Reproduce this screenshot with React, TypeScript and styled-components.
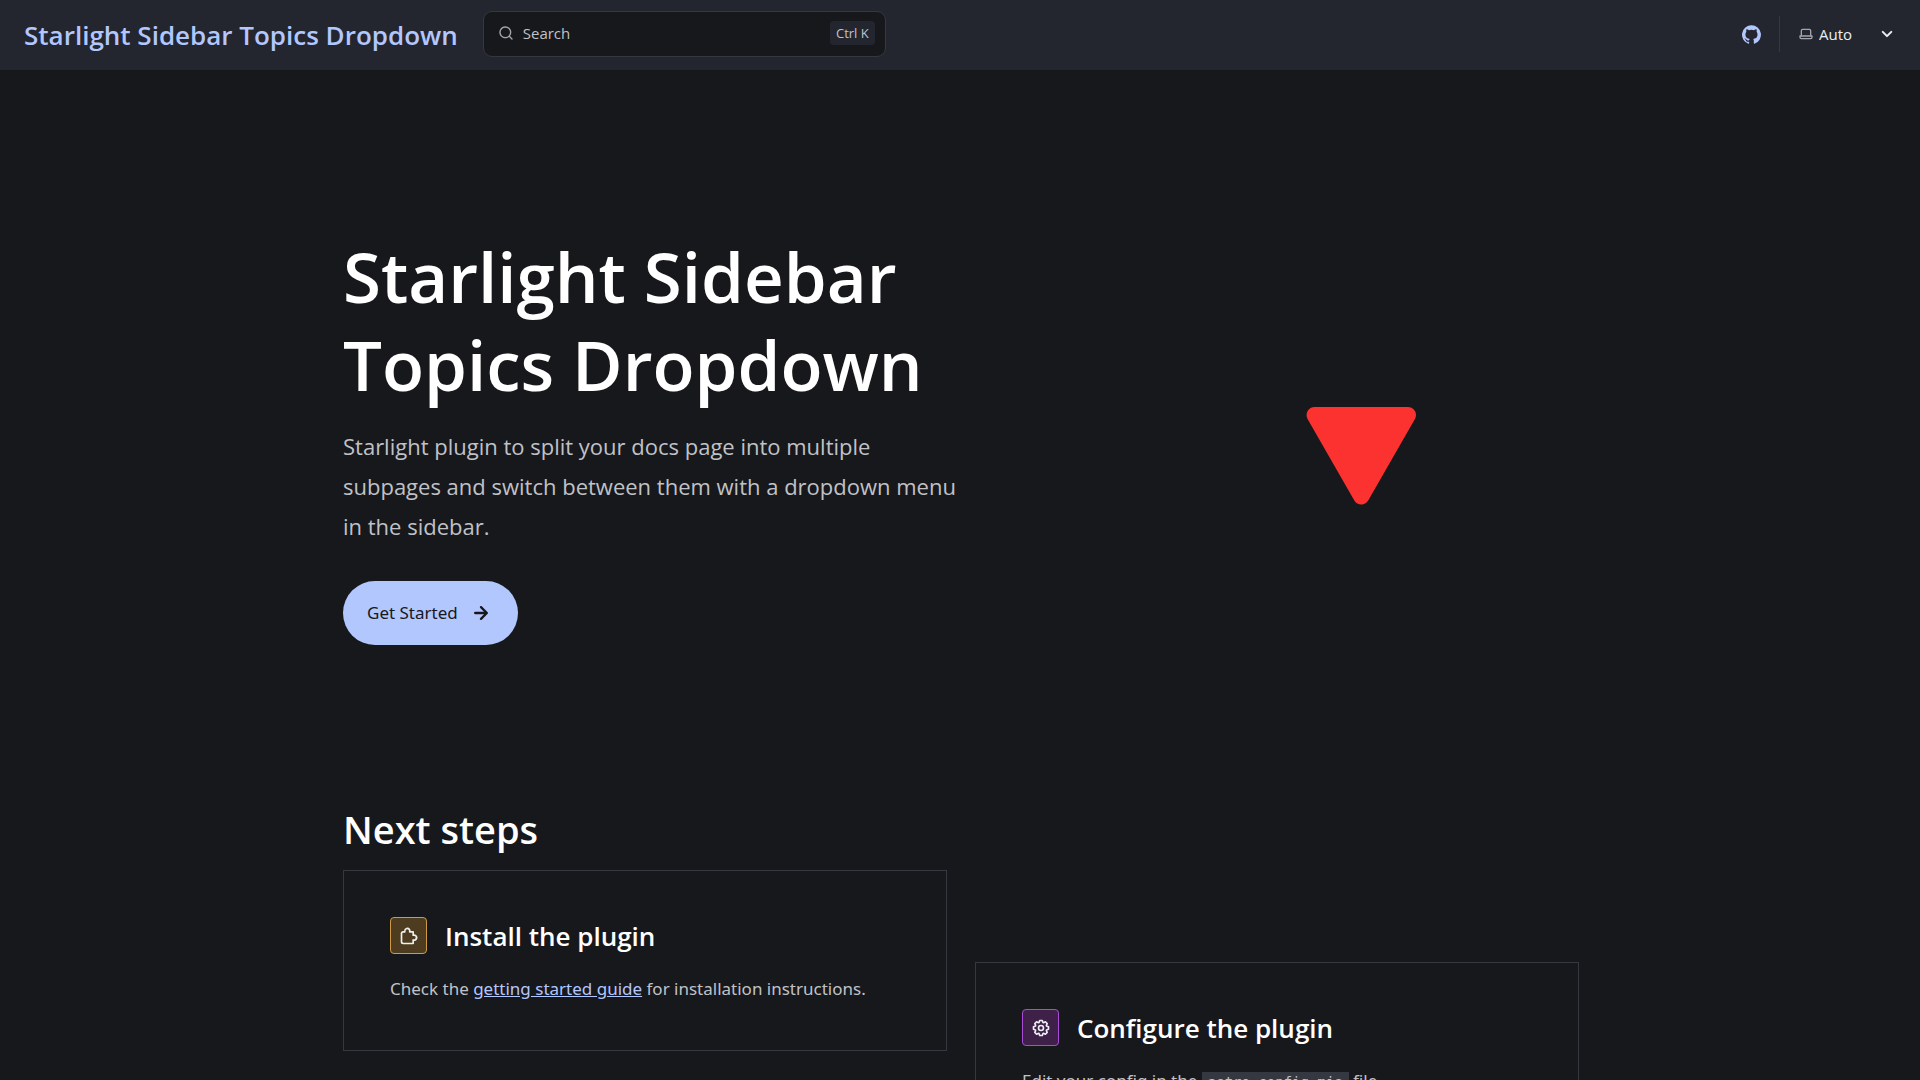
import React from "react";
import styled, { createGlobalStyle } from "styled-components";

const sans = '"Open Sans", "Noto Sans", sans-serif';
const prose = '"Noto Sans", "Open Sans", sans-serif';
const mono = '"DejaVu Sans Mono", "Liberation Mono", monospace';

const color = {
  page: "#17181c",
  panel: "#23262f",
  line: "#353841",
  text: "#c0c2c7",
  muted: "#a4a6ac",
  bright: "#eceef2",
  white: "#ffffff",
  accent: "#b3c7ff",
};

const GlobalStyle = createGlobalStyle`
  *, *::before, *::after { box-sizing: border-box; }
  body {
    margin: 0;
    background: ${color.page};
    color: ${color.text};
    font: 17px/30px ${prose};
  }
`;

const Page = styled.div`
  height: 100vh;
  overflow: hidden;
`;

const Header = styled.header`
  display: flex;
  align-items: center;
  gap: 25px;
  height: 70px;
  padding: 0 21px 2px 24px;
  background: ${color.panel};
`;

const SiteTitle = styled.a`
  padding-top: 2px;
  color: ${color.accent};
  font: 600 26px/36px ${sans};
  text-decoration: none;
  white-space: nowrap;
`;

const SearchButton = styled.button`
  display: flex;
  align-items: center;
  gap: 9px;
  width: 403px;
  height: 46px;
  padding: 0 10px 2px 14px;
  border: 1px solid ${color.line};
  border-radius: 9px;
  background: ${color.page};
  color: ${color.text};
  font: 15px/24px ${sans};
`;

const Key = styled.kbd`
  margin-left: auto;
  padding: 0 6px;
  border-radius: 4px;
  background: ${color.panel};
  font: 13px/24px ${sans};
`;

const HeaderTools = styled.div`
  display: flex;
  align-items: center;
  margin-left: auto;
`;

const SocialLink = styled.a`
  display: flex;
  align-items: center;
  height: 36px;
  padding-right: 18px;
  border-right: 1px solid ${color.line};
  color: ${color.accent};
`;

const ThemePicker = styled.label`
  display: flex;
  align-items: center;
  gap: 5px;
  padding-left: 18px;
  color: ${color.bright};
`;

const ThemeSelect = styled.select`
  width: 51px;
  padding: 0;
  border: 0;
  appearance: none;
  background: transparent;
  color: inherit;
  font: 15px/24px ${sans};
`;

const Main = styled.main`
  max-width: 1286px;
  margin: 0 auto;
  padding: 0 24px 0 26px;
`;

const Hero = styled.section`
  display: grid;
  grid-template-columns: 7fr 4fr;
  align-items: center;
  gap: 37px;
  padding: 162px 0 160px;
`;

const HeroTitle = styled.h1`
  margin: 0 0 18px;
  color: ${color.white};
  font: 600 69px/88px ${sans};
`;

const Tagline = styled.p`
  max-width: 620px;
  margin: 0 0 35px;
  font: 22px/40px ${sans};
`;

const ActionLink = styled.a`
  display: inline-flex;
  align-items: center;
  gap: 9px;
  height: 64px;
  padding: 0 23px 0 24px;
  border-radius: 32px;
  background: ${color.accent};
  color: ${color.page};
  text-decoration: none;
  vertical-align: top;
`;

const HeroArt = styled.svg`
  justify-self: center;
  width: 218px;
  height: 218px;
`;

const SectionTitle = styled.h2`
  margin: 0 0 17px;
  color: ${color.white};
  font: 600 38px/48px ${sans};
`;

const CardGrid = styled.div`
  display: grid;
  grid-template-columns: 1fr 1fr;
  align-items: start;
  gap: 28px;
`;

const Card = styled.article<{ $lowered?: boolean }>`
  display: flex;
  flex-direction: column;
  gap: 20px;
  margin-top: ${({ $lowered }) => ($lowered ? "92px" : "0")};
  padding: 46px;
  border: 1px solid ${color.line};
`;

const CardHead = styled.div`
  display: flex;
  align-items: center;
  gap: 18px;
  height: 37px;
`;

const CardIcon = styled.span<{ $line: string; $fill: string }>`
  display: grid;
  place-items: center;
  width: 37px;
  height: 37px;
  border: 1px solid ${({ $line }) => $line};
  border-radius: 4px;
  background: ${({ $fill }) => $fill};
  color: ${color.bright};
`;

const CardTitle = styled.h3`
  margin: 0;
  color: ${color.white};
  font: 600 26px/36px ${sans};
`;

const CardText = styled.p`
  margin: 0;
`;

const TextLink = styled.a`
  color: ${color.accent};
`;

const Code = styled.code`
  padding: 2px 6px;
  background: ${color.line};
  font: 14px/20px ${mono};
`;

const Glyph = styled.svg<{ $muted?: boolean }>`
  display: block;
  flex: none;
  fill: ${({ $muted }) => ($muted ? color.muted : "currentColor")};
`;

const paths = {
  search:
    "M21.71 20.29 18 16.61A9 9 0 1 0 16.61 18l3.68 3.68a1 1 0 0 0 1.42 0 1 1 0 0 0 0-1.39ZM11 18a7 7 0 1 1 0-14 7 7 0 0 1 0 14Z",
  github:
    "M12 .3a12 12 0 0 0-3.8 23.38c.6.12.83-.26.83-.57L9 21.07c-3.34.72-4.04-1.61-4.04-1.61-.55-1.39-1.34-1.76-1.34-1.76-1.08-.74.09-.73.09-.73 1.2.09 1.83 1.24 1.83 1.24 1.08 1.83 2.81 1.3 3.5 1 .1-.78.42-1.31.76-1.61-2.67-.3-5.47-1.33-5.47-5.93 0-1.31.47-2.38 1.24-3.22-.14-.3-.54-1.52.1-3.18 0 0 1-.32 3.3 1.23a11.5 11.5 0 0 1 6 0c2.28-1.55 3.29-1.23 3.29-1.23.64 1.66.24 2.88.12 3.18a4.65 4.65 0 0 1 1.23 3.22c0 4.61-2.8 5.63-5.48 5.92.42.36.81 1.1.81 2.22l-.01 3.29c0 .31.2.69.82.57A12 12 0 0 0 12 .3Z",
  laptop:
    "M21 14h-1V7a3 3 0 0 0-3-3H7a3 3 0 0 0-3 3v7H3a1 1 0 0 0-1 1v2a3 3 0 0 0 3 3h14a3 3 0 0 0 3-3v-2a1 1 0 0 0-1-1ZM6 7a1 1 0 0 1 1-1h10a1 1 0 0 1 1 1v7H6V7Zm14 10a1 1 0 0 1-1 1H5a1 1 0 0 1-1-1v-1h16v1Z",
  caret:
    "M17 9.17a1 1 0 0 0-1.41 0L12 12.71 8.46 9.17a1 1 0 1 0-1.41 1.42l4.24 4.24a1 1 0 0 0 1.42 0L17 10.59a1 1 0 0 0 0-1.42Z",
  arrow:
    "M17.92 11.62a1 1 0 0 0-.21-.33l-5-5a1 1 0 1 0-1.42 1.42l3.3 3.29H7a1 1 0 0 0 0 2h7.59l-3.3 3.29a1 1 0 0 0 .33 1.64 1 1 0 0 0 1.09-.22l5-5a1 1 0 0 0 .21-.33 1 1 0 0 0 0-.76Z",
  puzzle:
    "M17 22H5a3 3 0 0 1-3-3V9a3 3 0 0 1 3-3h1a4 4 0 0 1 7.3-2.3 4 4 0 0 1 .7 2.3h3a1 1 0 0 1 1 1v3a4 4 0 0 1 3.6 6.2A4 4 0 0 1 18 18v3a1 1 0 0 1-1 1ZM5 8a1 1 0 0 0-1 1v10a1 1 0 0 0 1 1h11v-3.2a1 1 0 0 1 1.3-1 2 2 0 0 0 2.7-1.9 2 2 0 0 0-2.7-1.9 1 1 0 0 1-1.3-1V8h-3.2a1 1 0 0 1-1-1.3A2 2 0 0 0 9.9 4 2 2 0 0 0 8 6.7 1 1 0 0 1 7.1 8H5Z",
  gear:
    "M21.32 9.55l-1.89-.63.89-1.78A1 1 0 0 0 20.13 6L18 3.87a1 1 0 0 0-1.15-.19l-1.78.89-.63-1.89A1 1 0 0 0 13.5 2h-3a1 1 0 0 0-.95.68l-.63 1.89-1.78-.89A1 1 0 0 0 6 3.87L3.87 6a1 1 0 0 0-.19 1.15l.89 1.78-1.89.63A1 1 0 0 0 2 10.5v3a1 1 0 0 0 .68.95l1.89.63-.89 1.78A1 1 0 0 0 3.87 18L6 20.13a1 1 0 0 0 1.15.19l1.78-.89.63 1.89a1 1 0 0 0 .95.68h3a1 1 0 0 0 .95-.68l.63-1.89 1.78.89a1 1 0 0 0 1.13-.19L20.13 18a1 1 0 0 0 .19-1.15l-.89-1.78 1.89-.63A1 1 0 0 0 22 13.5v-3a1 1 0 0 0-.68-.95ZM20 12.78l-1.2.4A2 2 0 0 0 17.64 16l.57 1.14-1.1 1.1-1.11-.6a2 2 0 0 0-2.79 1.16l-.4 1.2h-1.59l-.4-1.2A2 2 0 0 0 8 17.64l-1.14.57-1.1-1.1L6.36 16a2 2 0 0 0-1.16-2.82l-1.2-.4v-1.56l1.2-.4A2 2 0 0 0 6.36 8l-.57-1.11 1.1-1.1L8 6.36a2 2 0 0 0 2.82-1.16l.4-1.2h1.56l.4 1.2A2 2 0 0 0 16 6.36l1.14-.57 1.1 1.1-.6 1.11a2 2 0 0 0 1.16 2.79l1.2.4v1.59ZM12 8a4 4 0 1 0 0 8 4 4 0 0 0 0-8Zm0 6a2 2 0 1 1 0-4 2 2 0 0 1 0 4Z",
};

type IconProps = { name: keyof typeof paths; size: number; muted?: boolean };

function Icon({ name, size, muted }: IconProps) {
  return (
    <Glyph viewBox="0 0 24 24" width={size} height={size} $muted={muted} aria-hidden="true">
      <path d={paths[name]} />
    </Glyph>
  );
}

export default function App() {
  return (
    <Page>
      <GlobalStyle />
      <Header>
        <SiteTitle href="#">Starlight Sidebar Topics Dropdown</SiteTitle>
        <SearchButton type="button">
          <Icon name="search" size={16} muted />
          Search
          <Key>Ctrl K</Key>
        </SearchButton>
        <HeaderTools>
          <SocialLink href="#" aria-label="GitHub">
            <Icon name="github" size={19} />
          </SocialLink>
          <ThemePicker>
            <Icon name="laptop" size={16} muted />
            <ThemeSelect aria-label="Select theme" defaultValue="Auto">
              <option>Dark</option>
              <option>Light</option>
              <option>Auto</option>
            </ThemeSelect>
            <Icon name="caret" size={24} />
          </ThemePicker>
        </HeaderTools>
      </Header>
      <Main>
        <Hero>
          <div>
            <HeroTitle>Starlight Sidebar Topics Dropdown</HeroTitle>
            <Tagline>
              Starlight plugin to split your docs page into multiple subpages and switch between
              them with a dropdown menu in the sidebar.
            </Tagline>
            <ActionLink href="#">
              Get Started
              <Icon name="arrow" size={28} />
            </ActionLink>
          </div>
          <HeroArt viewBox="0 0 218 218" aria-hidden="true">
            <path
              d="M62.5 85H156L109.25 166.5Z"
              fill="#fb322f"
              stroke="#fb322f"
              strokeWidth="16"
              strokeLinejoin="round"
            />
          </HeroArt>
        </Hero>
        <SectionTitle>Next steps</SectionTitle>
        <CardGrid>
          <Card>
            <CardHead>
              <CardIcon $line="#d09a44" $fill="#4d3c1f">
                <Icon name="puzzle" size={20} />
              </CardIcon>
              <CardTitle>Install the plugin</CardTitle>
            </CardHead>
            <CardText>
              Check the <TextLink href="#">getting started guide</TextLink> for installation
              instructions.
            </CardText>
          </Card>
          <Card $lowered>
            <CardHead>
              <CardIcon $line="#a94bd8" $fill="#3e2049">
                <Icon name="gear" size={20} />
              </CardIcon>
              <CardTitle>Configure the plugin</CardTitle>
            </CardHead>
            <CardText>
              Edit your config in the <Code>astro.config.mjs</Code> file.
            </CardText>
          </Card>
        </CardGrid>
      </Main>
    </Page>
  );
}
